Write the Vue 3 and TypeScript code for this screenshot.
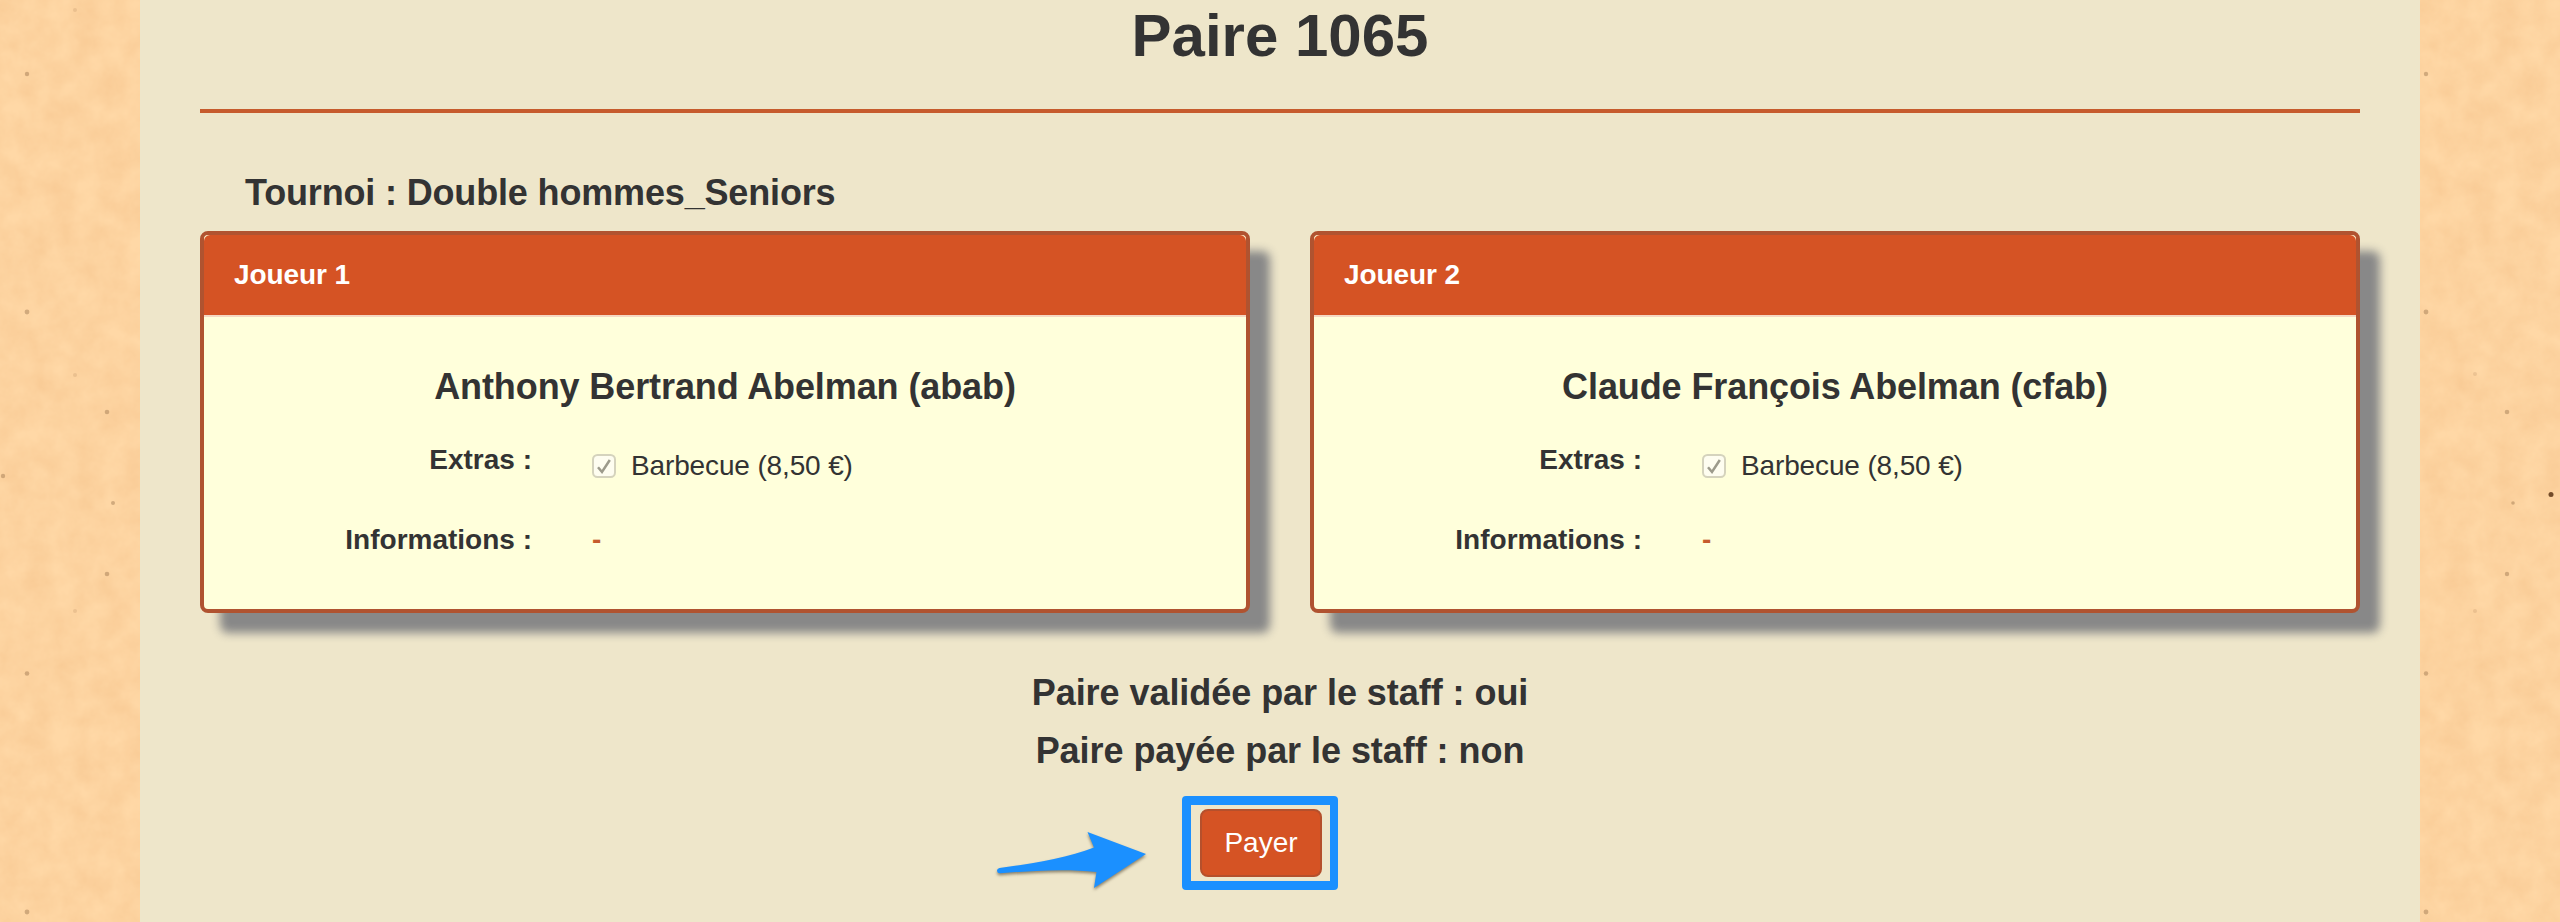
<script setup lang="ts">
interface Player {
  title: string
  name: string
  extra: string
  info: string
}

interface Speck {
  x: number
  y: number
  r: number
  o: number
}

const players: Player[] = [
  { title: 'Joueur 1', name: 'Anthony Bertrand Abelman (abab)', extra: 'Barbecue (8,50 €)', info: '-' },
  { title: 'Joueur 2', name: 'Claude François Abelman (cfab)', extra: 'Barbecue (8,50 €)', info: '-' },
]

const leftSpecks: Speck[] = [
  { x: 75, y: 10, r: 2, o: 0.12 },
  { x: 27, y: 74, r: 2.2, o: 0.3 },
  { x: 27, y: 312, r: 2.4, o: 0.3 },
  { x: 75, y: 375, r: 2, o: 0.12 },
  { x: 107, y: 412, r: 2.3, o: 0.3 },
  { x: 3, y: 476, r: 2.2, o: 0.3 },
  { x: 113, y: 503, r: 2, o: 0.3 },
  { x: 107, y: 574, r: 2.3, o: 0.3 },
  { x: 75, y: 611, r: 2, o: 0.12 },
  { x: 27, y: 673.5, r: 2.3, o: 0.3 },
  { x: 27, y: 912, r: 2.4, o: 0.3 },
]

const rightSpecks: Speck[] = [
  { x: 6, y: 74, r: 2.2, o: 0.3 },
  { x: 6, y: 312, r: 2.4, o: 0.3 },
  { x: 55, y: 374, r: 2, o: 0.12 },
  { x: 87, y: 412, r: 2.3, o: 0.3 },
  { x: 131, y: 494.5, r: 2.5, o: 0.95 },
  { x: 93, y: 503, r: 1.8, o: 0.3 },
  { x: 87, y: 574, r: 2.2, o: 0.3 },
  { x: 55, y: 611, r: 2, o: 0.12 },
  { x: 6, y: 673.5, r: 2.2, o: 0.3 },
  { x: 6, y: 912, r: 2.4, o: 0.3 },
]
</script>

<template>
  <div class="page">
    <svg class="paper" width="140" height="922" aria-hidden="true">
      <filter id="grain" x="0" y="0" width="100%" height="100%" color-interpolation-filters="sRGB">
        <feTurbulence type="fractalNoise" baseFrequency="0.04" numOctaves="4" seed="4" />
        <feColorMatrix values="0 0 0 0 0.92  0 0 0 0 0.68  0 0 0 0 0.44  0.4 0 0 0 -0.08" />
      </filter>
      <rect width="140" height="922" filter="url(#grain)" />
      <circle v-for="s in leftSpecks" :key="s.y" :cx="s.x" :cy="s.y" :r="s.r" :opacity="s.o" class="speck" />
    </svg>

    <main class="content">
      <h1>Paire 1065</h1>
      <hr />
      <h3 class="tournament">Tournoi : Double hommes_Seniors</h3>

      <div class="cards">
        <section v-for="p in players" :key="p.title" class="card">
          <header><span>{{ p.title }}</span></header>
          <div class="body">
            <h3>{{ p.name }}</h3>
            <div class="row extras">
              <span class="label">Extras :</span>
              <div class="value option">
                <svg class="check" width="24" height="24" viewBox="0 0 24 24" aria-hidden="true">
                  <rect x="1" y="1" width="22" height="22" rx="4.5" fill="#fefdf0" stroke="#d5d3bd" stroke-width="2" />
                  <path d="M6 13.2 L10 18 L17.8 6" fill="none" stroke="#9c9a8b" stroke-width="2.5" />
                </svg>
                <span>{{ p.extra }}</span>
              </div>
            </div>
            <div class="row infos">
              <span class="label">Informations :</span>
              <span class="value dash">{{ p.info }}</span>
            </div>
          </div>
        </section>
      </div>

      <div class="status">
        <h3>Paire validée par le staff : oui</h3>
        <h3>Paire payée par le staff : non</h3>
      </div>

      <div class="action">
        <svg class="arrow" width="160" height="72" viewBox="0 0 160 72" aria-hidden="true">
          <path
            d="M7.5 28 Q4.8 28.8 5 31 Q5.4 33.6 8.5 33.3 C43 30.5 74 28.5 104.5 32 L102 48 L154 14 L95.5 -8 L102 7.5 C76 18 38 24 7.5 28 Z"
            transform="translate(0 10)"
          />
        </svg>
        <div class="highlight"><button type="button">Payer</button></div>
      </div>
    </main>

    <svg class="paper" width="140" height="922" aria-hidden="true">
      <rect width="140" height="922" filter="url(#grain)" />
      <circle v-for="s in rightSpecks" :key="s.y" :cx="s.x" :cy="s.y" :r="s.r" :opacity="s.o" class="speck" />
    </svg>
  </div>
</template>

<style>
body {
  margin: 0;
  overflow: hidden;
}
</style>

<style scoped>
.page {
  display: grid;
  grid-template-columns: 140px 1fr 140px;
  height: 922px;
  overflow: hidden;
  background: #ffd8a6;
  color: #333;
  font-family: 'Liberation Sans', Arial, sans-serif;
  font-size: 28px;
  line-height: 40px;
}
.paper {
  display: block;
}
.speck {
  fill: #6b4423;
}
.content {
  box-sizing: border-box;
  padding: 3px 60px 0;
  background: #eee6ca;
}
h1,
h3 {
  margin: 0;
  font-weight: bold;
}
h1 {
  font-size: 60px;
  line-height: 66px;
  text-align: center;
}
h3 {
  font-size: 36px;
  line-height: 40px;
  letter-spacing: -0.1px;
}
hr {
  height: 4px;
  margin: 40px 0 0;
  border: 0;
  background: #c65b2d;
}
.tournament {
  margin: 60px 0 0 45px;
  letter-spacing: -0.16px;
}
.cards {
  display: grid;
  grid-template-columns: 1fr 1fr;
  gap: 60px;
  margin-top: 18px;
}
.card {
  box-sizing: border-box;
  height: 382px;
  border: 4px solid #b05330;
  border-radius: 8px;
  background: #ffffdb;
  box-shadow: 20px 20px 10px #888;
}
.card header {
  height: 80px;
  padding-left: 30px;
  border-bottom: 2px solid #f5d8c2;
  border-radius: 6px 6px 0 0;
  background: #d55324;
  background-clip: padding-box;
  color: #fff;
  font-weight: bold;
  line-height: 80px;
  letter-spacing: -0.1px;
}
.body h3 {
  padding-top: 50px;
  text-align: center;
}
.row {
  display: grid;
  grid-template-columns: 328px 1fr;
  column-gap: 60px;
}
.extras {
  margin-top: 33px;
}
.infos {
  margin-top: 34px;
}
.label {
  font-weight: bold;
  text-align: right;
}
.option {
  display: flex;
  align-items: center;
  gap: 15px;
  padding-top: 6px;
  letter-spacing: -0.14px;
}
.check {
  flex: none;
}
.dash {
  color: #c65b2d;
  font-weight: bold;
}
.status {
  margin-top: 51px;
  text-align: center;
}
.status h3 {
  line-height: 58px;
  letter-spacing: -0.05px;
}
.action {
  display: flex;
  justify-content: flex-start;
  margin: 16px 0 0 792px;
}
.arrow {
  margin-top: 34px;
  overflow: visible;
  fill: #1b90ff;
  filter: drop-shadow(0 2px 1.5px rgba(60, 50, 30, 0.55));
}
.highlight {
  box-sizing: border-box;
  width: 156px;
  height: 94px;
  margin-left: 30px;
  padding: 4px 9px;
  border: 9px solid #1b90ff;
  border-right-width: 8px;
  border-radius: 4px;
}
button {
  display: block;
  box-sizing: border-box;
  width: 122px;
  height: 68px;
  padding: 0;
  border: 2px solid #b5502c;
  border-radius: 8px;
  background: #d55324;
  color: #fff;
  font: 28px/64px 'Liberation Sans', Arial, sans-serif;
}
</style>
